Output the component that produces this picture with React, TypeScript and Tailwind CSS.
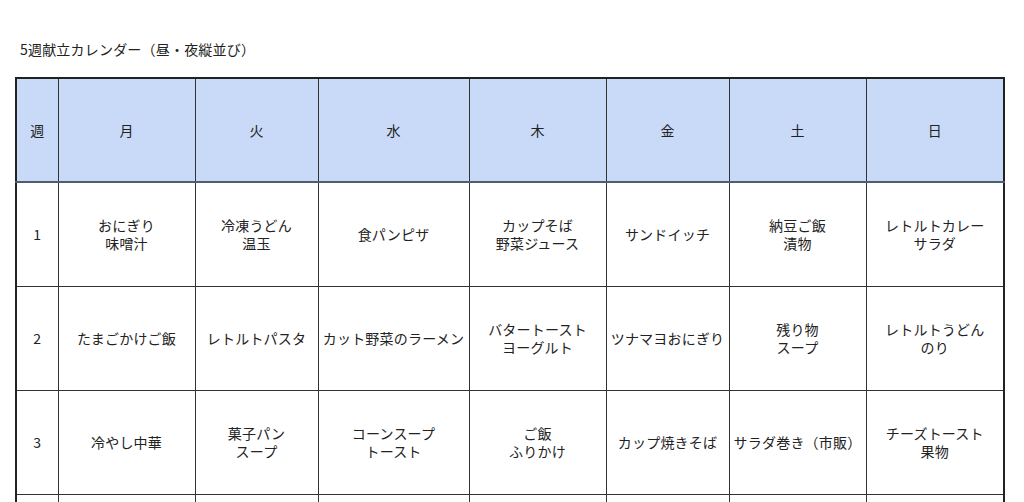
const days = ["月", "火", "水", "木", "金", "土", "日"];

const widths = [42, 137, 123, 151, 137, 123, 137, 138];

const weeks: string[][][] = [
  [
    ["おにぎり", "味噌汁"],
    ["冷凍うどん", "温玉"],
    ["食パンピザ"],
    ["カップそば", "野菜ジュース"],
    ["サンドイッチ"],
    ["納豆ご飯", "漬物"],
    ["レトルトカレー", "サラダ"],
  ],
  [
    ["たまごかけご飯"],
    ["レトルトパスタ"],
    ["カット野菜のラーメン"],
    ["バタートースト", "ヨーグルト"],
    ["ツナマヨおにぎり"],
    ["残り物", "スープ"],
    ["レトルトうどん", "のり"],
  ],
  [
    ["冷やし中華"],
    ["菓子パン", "スープ"],
    ["コーンスープ", "トースト"],
    ["ご飯", "ふりかけ"],
    ["カップ焼きそば"],
    ["サラダ巻き（市販）"],
    ["チーズトースト", "果物"],
  ],
  [[], [], [], [], [], [], []],
];

export default function App() {
  return (
    <div
      className="min-h-screen bg-white pl-[15px] pt-[40px] text-[#222]"
      style={{ fontFamily: '"Noto Sans CJK JP", "Noto Sans", sans-serif' }}
    >
      <h1 className="ml-[5px] text-[14px] leading-[18px] tracking-[0.2px] font-normal">
        5週献立カレンダー（昼・夜縦並び）
      </h1>

      <table className="mt-[19px] table-fixed border-collapse border-2 border-[#222] text-[14px] leading-[18px] tracking-[0.2px]">
        <colgroup>
          {widths.map((w, i) => (
            <col key={i} style={{ width: w }} />
          ))}
        </colgroup>
        <thead>
          <tr className="h-[104px] bg-[#c9daf8]">
            <th className="border border-[#333] border-b-2 border-b-[#4f5d70] font-normal">週</th>
            {days.map((d) => (
              <th key={d} className="border border-[#333] border-b-2 border-b-[#4f5d70] font-normal">
                {d}
              </th>
            ))}
          </tr>
        </thead>
        <tbody>
          {weeks.map((row, i) => (
            <tr key={i} className="h-[104px]">
              <td className="border border-[#333] text-center">{i + 1}</td>
              {row.map((lines, j) => (
                <td key={j} className="border border-[#333] px-0 text-center whitespace-nowrap">
                  {lines.map((l) => (
                    <div key={l}>{l}</div>
                  ))}
                </td>
              ))}
            </tr>
          ))}
        </tbody>
      </table>
    </div>
  );
}
